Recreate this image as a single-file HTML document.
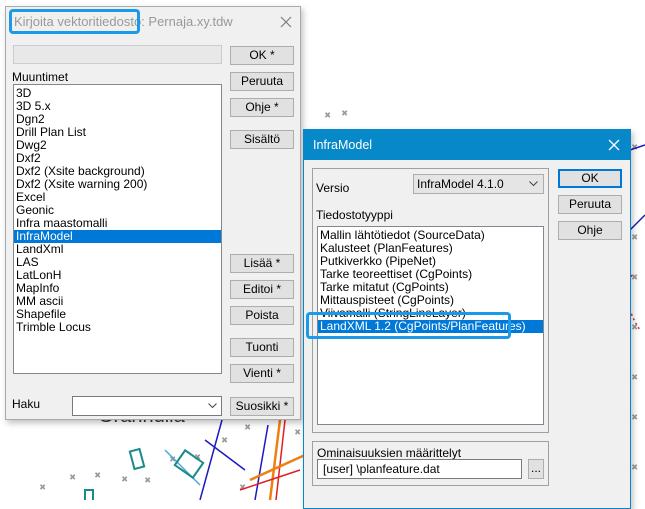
<!DOCTYPE html>
<html><head><meta charset="utf-8"><style>
*{box-sizing:border-box;margin:0;padding:0}
body{width:645px;height:500px;overflow:hidden;background:#fff;position:relative;font-family:"Liberation Sans",sans-serif;font-size:12px;color:#000}
.a{position:absolute}
.dlg{background:#f0f0f0}
.btn{position:absolute;background:#e1e1e1;border:1px solid #adadad;text-align:center;line-height:17px;font-size:12px}
.list{position:absolute;background:#fff;border:1px solid #828790}
.it{height:13px;line-height:13px;padding-left:2px;white-space:nowrap;font-size:12px}
.sel{background:#0078d7;color:#fff}
</style></head><body>
<svg class="a" style="left:0;top:0" width="645" height="500">
<g stroke="#999" stroke-width="1" font-size="9" fill="#999">
<text x="325" y="118">×</text><text x="342" y="116">×</text><text x="632" y="150">×</text><text x="632" y="240">×</text><text x="632" y="280">×</text><text x="632" y="330">×</text><text x="632" y="380">×</text><text x="632" y="420">×</text><text x="632" y="470">×</text>
<text x="245" y="430">×</text><text x="222" y="443">×</text><text x="170" y="462">×</text><text x="95" y="478">×</text><text x="122" y="482">×</text><text x="70" y="480">×</text><text x="40" y="490">×</text><text x="145" y="483">×</text><text x="195" y="460">×</text><text x="295" y="435">×</text><text x="240" y="490">×</text>
</g>
<text x="98" y="422" font-size="20" fill="#333" font-family="Liberation Sans">Granhulla</text>
<g fill="none" stroke-width="1.5">
<path d="M222 420 L200 500" stroke="#1a1ac0"/>
<path d="M268 425 L255 500" stroke="#1a1ac0"/>
<path d="M280 420 L270 500" stroke="#f07f10" stroke-width="2.5"/>
<path d="M285 420 L276 500" stroke="#e02020"/>
<path d="M205 440 L245 470" stroke="#1a1ac0"/>
<path d="M250 480 L305 455" stroke="#f07f10" stroke-width="2.5"/>
<path d="M165 450 L200 485" stroke="#48a8d8"/>
<path d="M240 490 L300 470" stroke="#e02020"/>
<path d="M630 150 L645 145 M630 230 L645 215" stroke="#1a1ac0"/>
<path d="M632 275 Q620 300 640 330" stroke="#e02020" stroke-dasharray="2 3"/>
</g>
<rect x="132" y="450" width="10" height="18" fill="none" stroke="#1a8a8a" stroke-width="2" transform="rotate(-15 137 459)"/>
<rect x="178" y="455" width="22" height="18" fill="none" stroke="#1a8a8a" stroke-width="2" transform="rotate(35 189 464)"/>
<rect x="85" y="490" width="8" height="12" fill="none" stroke="#1a8a8a" stroke-width="2"/>
</svg>

<!-- Dialog 1 -->
<div class="a dlg" style="left:5px;top:6px;width:296px;height:414px;border:1px solid #aaa;box-shadow:2px 3px 6px rgba(0,0,0,.25)">
 <div class="a" style="left:8px;top:7px;font-size:13px;color:#999;white-space:nowrap">Kirjoita vektoritiedosto: Pernaja.xy.tdw</div>
 <svg class="a" style="left:274px;top:9px" width="12" height="12"><path d="M1 1L11 11M11 1L1 11" stroke="#777" stroke-width="1.1"/></svg>
 <div class="a" style="left:7px;top:38px;width:209px;height:19px;background:#e8e8e8;border:1px solid #ccc"></div>
 <div class="a" style="left:6px;top:63px;font-size:12px">Muuntimet</div>
 <div class="list" style="left:7px;top:77px;width:209px;height:290px;padding-top:2px">
  <div class="it">3D</div><div class="it">3D 5.x</div><div class="it">Dgn2</div><div class="it">Drill Plan List</div><div class="it">Dwg2</div><div class="it">Dxf2</div><div class="it">Dxf2 (Xsite background)</div><div class="it">Dxf2 (Xsite warning 200)</div><div class="it">Excel</div><div class="it">Geonic</div><div class="it">Infra maastomalli</div><div class="it sel">InfraModel</div><div class="it">LandXml</div><div class="it">LAS</div><div class="it">LatLonH</div><div class="it">MapInfo</div><div class="it">MM ascii</div><div class="it">Shapefile</div><div class="it">Trimble Locus</div>
 </div>
 <div class="btn" style="left:224px;top:39px;width:64px;height:19px">OK *</div>
 <div class="btn" style="left:224px;top:65px;width:64px;height:19px">Peruuta</div>
 <div class="btn" style="left:224px;top:91px;width:64px;height:19px">Ohje *</div>
 <div class="btn" style="left:224px;top:123px;width:64px;height:19px">Sisältö</div>
 <div class="btn" style="left:224px;top:247px;width:64px;height:19px">Lisää *</div>
 <div class="btn" style="left:224px;top:273px;width:64px;height:19px">Editoi *</div>
 <div class="btn" style="left:224px;top:299px;width:64px;height:19px">Poista</div>
 <div class="btn" style="left:224px;top:331px;width:64px;height:19px">Tuonti</div>
 <div class="btn" style="left:224px;top:357px;width:64px;height:19px">Vienti *</div>
 <div class="btn" style="left:224px;top:390px;width:64px;height:19px">Suosikki *</div>
 <div class="a" style="left:6px;top:390px;font-size:12px">Haku</div>
 <div class="a" style="left:66px;top:389px;width:150px;height:20px;background:#fff;border:1px solid #7a7a7a"><svg class="a" style="right:4px;top:6px" width="9" height="6"><path d="M0.5 0.5L4.5 4.5L8.5 0.5" fill="none" stroke="#444"/></svg></div>
</div>
<div class="a" style="left:9px;top:9px;width:131px;height:25px;border:3px solid #1a9ae8;border-radius:4px"></div>

<!-- Dialog 2 -->
<div class="a dlg" style="left:303px;top:129px;width:328px;height:380px;border:1px solid #0a86c8;box-shadow:2px 3px 6px rgba(0,0,0,.25)">
 <div class="a" style="left:0;top:0;width:326px;height:30px;background:#0788c9;color:#fff;font-size:12.5px;line-height:30px;padding-left:9px">InfraModel</div>
 <svg class="a" style="left:304px;top:9px" width="12" height="12"><path d="M1 1L11 11M11 1L1 11" stroke="#fff" stroke-width="1.3"/></svg>
 <div class="a" style="left:8px;top:38px;width:237px;height:265px;border:1px solid #a0a0a0"></div>
 <div class="a" style="left:12px;top:51px;font-size:12px">Versio</div>
 <div class="a" style="left:109px;top:44px;width:131px;height:20px;background:#e5e5e5;border:1px solid #adadad;font-size:12px;line-height:18px;padding-left:3px">InfraModel 4.1.0<svg class="a" style="right:5px;top:6px" width="9" height="6"><path d="M0.5 0.5L4.5 4.5L8.5 0.5" fill="none" stroke="#444"/></svg></div>
 <div class="a" style="left:12px;top:78px;font-size:12px">Tiedostotyyppi</div>
 <div class="list" style="left:13px;top:96px;width:227px;height:199px;padding-top:2px">
  <div class="it">Mallin lähtötiedot (SourceData)</div><div class="it">Kalusteet (PlanFeatures)</div><div class="it">Putkiverkko (PipeNet)</div><div class="it">Tarke teoreettiset (CgPoints)</div><div class="it">Tarke mitatut (CgPoints)</div><div class="it">Mittauspisteet (CgPoints)</div><div class="it">Viivamalli (StringLineLayer)</div><div class="it sel">LandXML 1.2 (CgPoints/PlanFeatures)</div>
 </div>
 <div class="btn" style="left:254px;top:39px;width:64px;height:19px;border:2px solid #0078d7;line-height:15px">OK</div>
 <div class="btn" style="left:254px;top:65px;width:64px;height:19px">Peruuta</div>
 <div class="btn" style="left:254px;top:91px;width:64px;height:19px">Ohje</div>
 <div class="a" style="left:8px;top:311px;width:237px;height:45px;border:1px solid #a0a0a0"></div>
 <div class="a" style="left:13px;top:316px;font-size:12px">Ominaisuuksien määrittelyt</div>
 <div class="a" style="left:13px;top:329px;width:205px;height:20px;background:#fff;border:1px solid #7a7a7a;font-size:12px;line-height:18px;padding-left:5px">[user] \planfeature.dat</div>
 <div class="btn" style="left:224px;top:329px;width:16px;height:20px;line-height:16px">...</div>
</div>
<div class="a" style="left:306px;top:312px;width:205px;height:27px;border:3px solid #1a9ae8;border-radius:4px"></div>
</body></html>
